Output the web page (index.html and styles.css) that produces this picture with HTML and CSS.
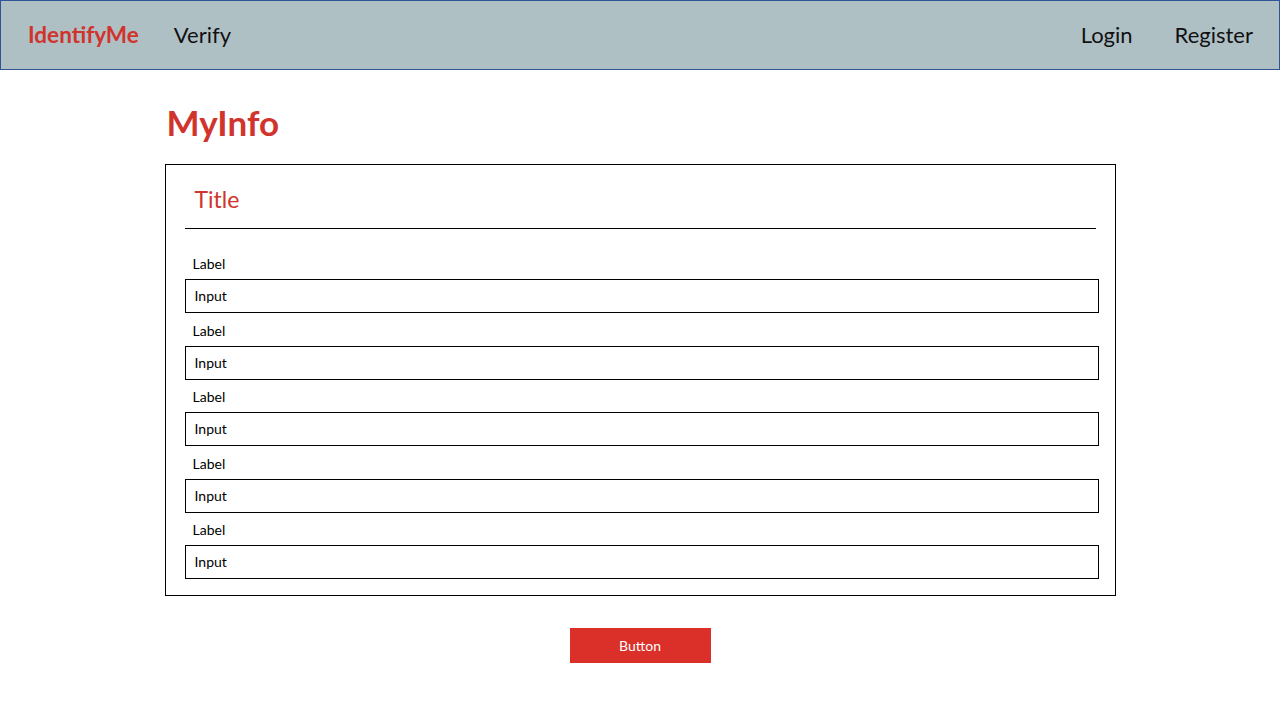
FILE: index.html
```html
<!DOCTYPE html>
<html lang="en">
<head>
<meta charset="utf-8">
<title>MyInfo</title>
<link rel="stylesheet" href="styles.css">
</head>
<body>
<header class="navbar">
  <nav class="nav-left">
    <a class="brand" href="#">IdentifyMe</a>
    <a class="nav-link" href="#">Verify</a>
  </nav>
  <nav class="nav-right">
    <a class="nav-link" href="#">Login</a>
    <a class="nav-link" href="#">Register</a>
  </nav>
</header>
<main class="page">
  <h1 class="page-title">MyInfo</h1>
  <section class="card">
    <h2 class="card-title">Title</h2>
    <div class="divider"></div>
    <form class="fields">
      <div class="field"><label class="field-label">Label</label><div class="input">Input</div></div>
      <div class="field"><label class="field-label">Label</label><div class="input">Input</div></div>
      <div class="field"><label class="field-label">Label</label><div class="input">Input</div></div>
      <div class="field"><label class="field-label">Label</label><div class="input">Input</div></div>
      <div class="field"><label class="field-label">Label</label><div class="input">Input</div></div>
    </form>
  </section>
  <div class="actions">
    <button class="btn" type="button">Button</button>
  </div>
</main>
</body>
</html>
```
FILE: styles.css
```css
* { box-sizing: border-box; }
html, body { margin: 0; padding: 0; background: #ffffff; }
body {
  font-family: Lato, "Open Sans", sans-serif;
  color: #000000;
  width: 1280px;
}
a { text-decoration: none; color: inherit; }

.navbar {
  height: 70px;
  background: #afc0c5;
  border: 1px solid #2f5597;
  display: flex;
  align-items: center;
  justify-content: space-between;
  padding: 0 26px 2px 27px;
}
.nav-left, .nav-right {
  display: flex;
  align-items: center;
  gap: 35px;
}
.nav-right { gap: 42px; }
.brand {
  color: #d0342c;
  font-weight: 700;
  font-size: 22.5px;
}
.nav-link {
  font-size: 22px;
  color: #111111;
}

.page {
  width: 951px;
  margin: 0 auto;
}
.page-title {
  margin: 31px 0 0 2px;
  height: 63px;
  line-height: 42px;
  font-size: 35px;
  font-weight: 700;
  color: #d0342c;
}
.card {
  border: 1px solid #000000;
  padding: 19px 16px 16px 19px;
}
.card-title {
  margin: 0 0 14px 10px;
  font-size: 23px;
  line-height: 30px;
  font-weight: 400;
  color: #d0342c;
}
.divider {
  height: 1px;
  background: #000000;
  margin-right: 3px;
}
.fields {
  display: flex;
  flex-direction: column;
  gap: 7.5px;
  margin-top: 25px;
}
.field {
  display: flex;
  flex-direction: column;
}
.field-label {
  font-size: 14px;
  line-height: 19px;
  margin: 0 0 6px 8px;
}
.input {
  height: 34px;
  border: 1px solid #000000;
  font-size: 14px;
  line-height: 32px;
  padding-left: 9px;
}
.actions {
  display: flex;
  justify-content: center;
  margin-top: 32px;
}
.btn {
  width: 141px;
  height: 35px;
  background: #da3029;
  border: none;
  color: #ffffff;
  font-family: Lato, "Open Sans", sans-serif;
  font-size: 14px;
  padding: 0;
}
```
